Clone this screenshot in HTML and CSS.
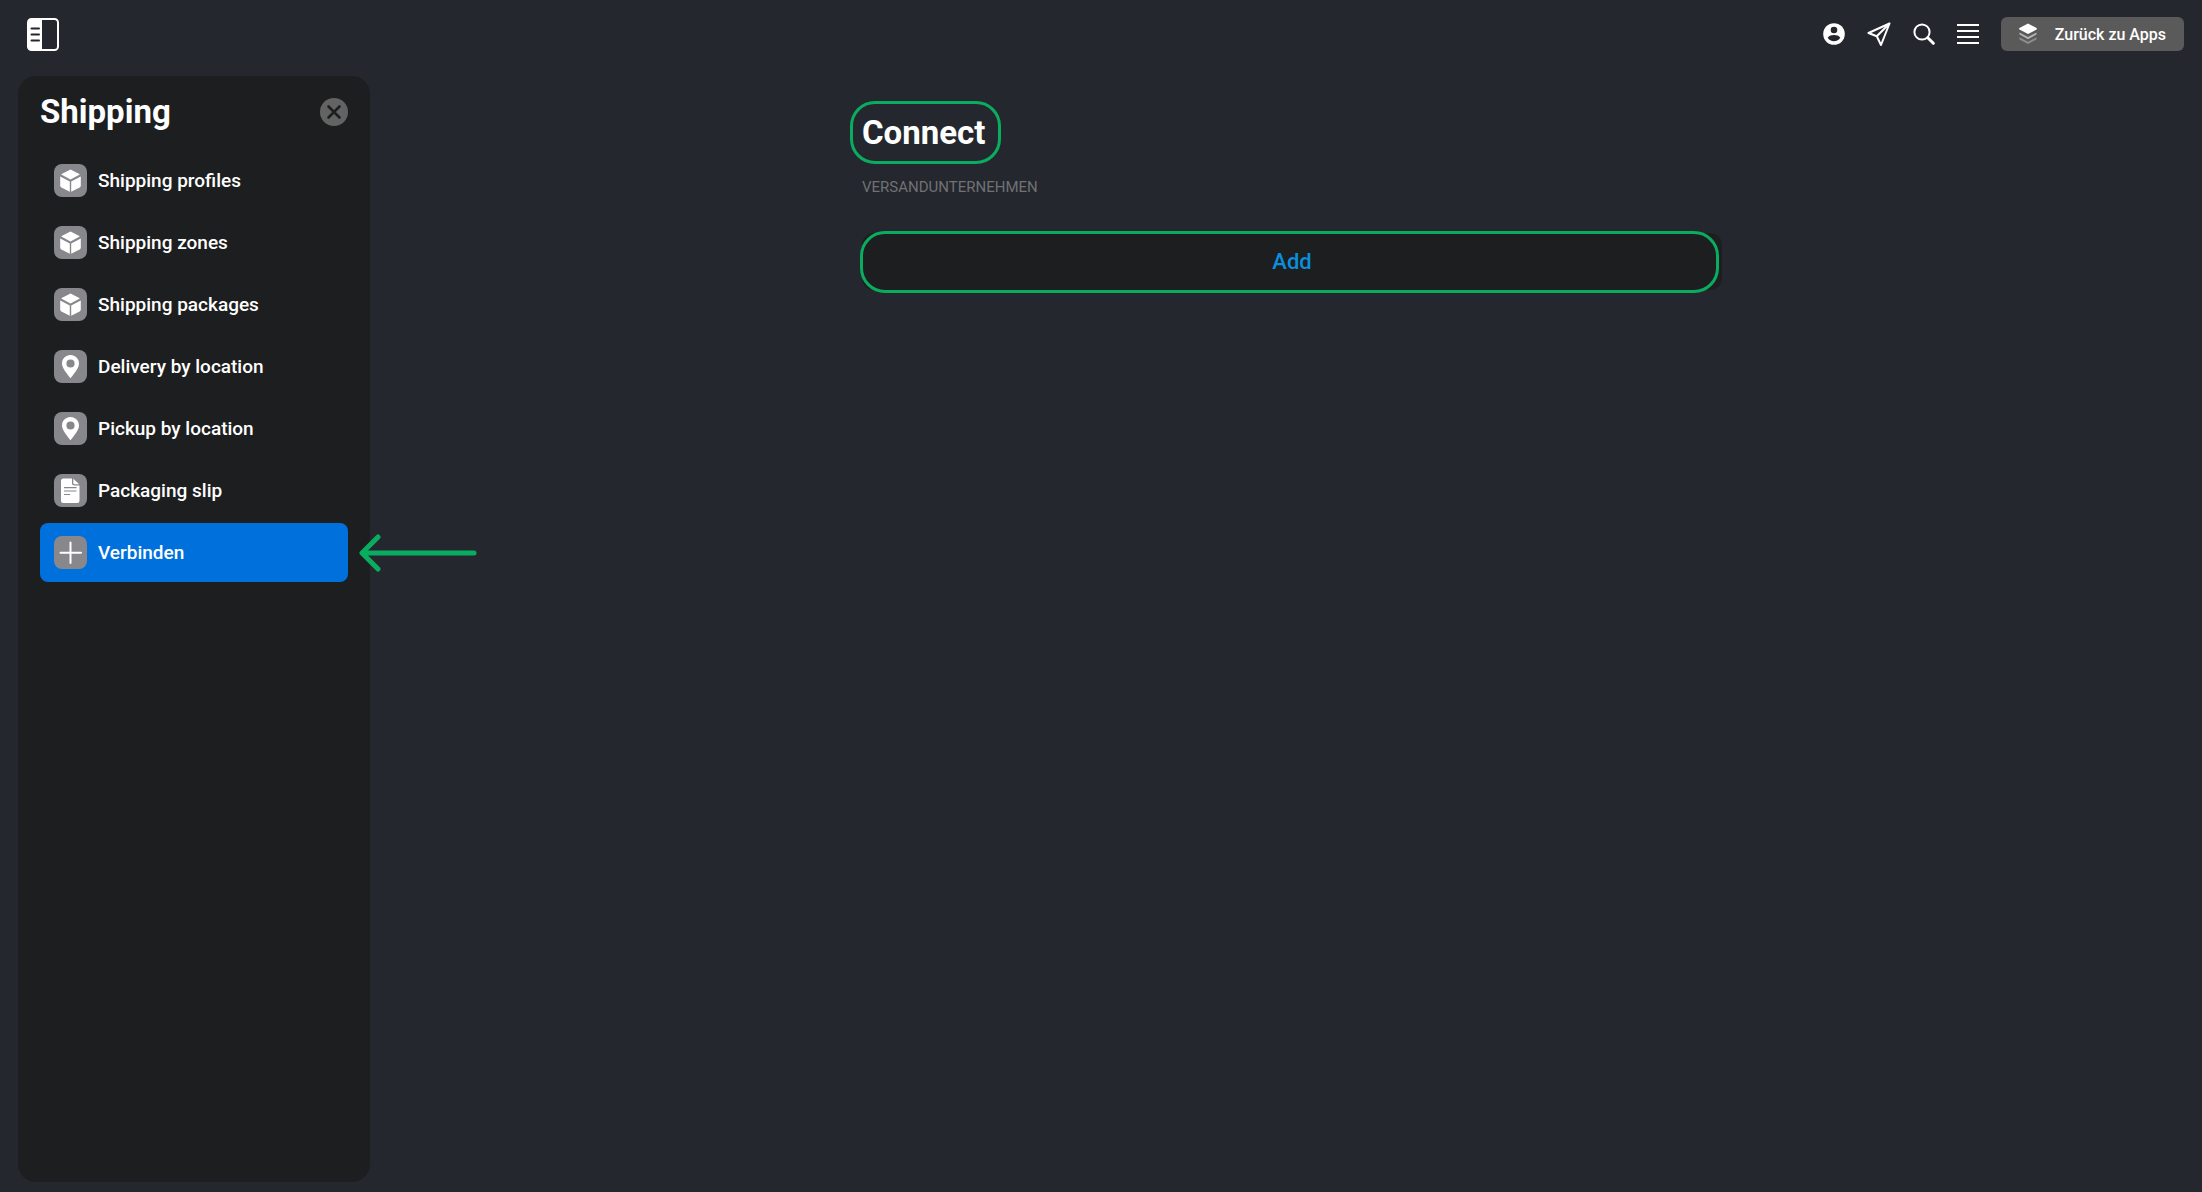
FILE: index.html
```html
<!DOCTYPE html>
<html lang="de">
<head>
    <meta charset="UTF-8">
    <meta name="viewport" content="width=device-width, initial-scale=1.0">
    <title>Shipping</title>
    <link rel="stylesheet" href="styles.css">
</head>
<body>
    <!-- Shared icon shapes -->
    <svg class="sprite" aria-hidden="true">
        <symbol id="icon-box" viewBox="0 0 33 33">
            <path d="M16.500 5.400 L25.300 10 Q25.800 10.400 25.300 10.800 L16.500 15.400 L7.700 10.800 Q7.200 10.400 7.700 10Z"/>
            <path d="M6.200 12.600 L15.800 17.600 V27.800 L7.400 23.600 Q6.200 23 6.200 21.600Z"/>
            <path d="M26.800 12.600 L17.200 17.600 V27.800 L25.600 23.600 Q26.800 23 26.800 21.600Z"/>
        </symbol>
        <symbol id="icon-pin" viewBox="0 0 33 33">
            <path fill-rule="evenodd" d="M16.500 5 C11.700 5 8 8.700 8 13.400 C8 18.500 13.500 24 16.500 28.200 C19.500 24 25 18.500 25 13.400 C25 8.700 21.300 5 16.500 5Z M16.500 9.400 A4.100 4.100 0 1 1 16.500 17.600 A4.100 4.100 0 1 1 16.500 9.400Z"/>
        </symbol>
    </svg>

    <!-- Top Bar -->
    <header class="topbar">
        <button class="icon-btn" aria-label="Seitenleiste">
            <svg width="32" height="33" viewBox="0 0 32 33">
                <rect x="1" y="1" width="30" height="31" rx="3.500" fill="none" stroke="#fff" stroke-width="2"/>
                <path d="M4 1H15V32H4Q1 32 1 29V4Q1 1 4 1Z" fill="#fff"/>
                <path d="M4.500 10.500H12M4.500 16.500H12M4.500 22.500H12" stroke="#24272e" stroke-width="2" stroke-linecap="round"/>
            </svg>
        </button>
        <div class="topbar-actions">
            <button class="icon-btn" aria-label="Konto">
                <svg width="22" height="22" viewBox="0 0 22 22">
                    <circle cx="11" cy="11" r="10.800" fill="#fff"/>
                    <circle cx="11" cy="7" r="3.300" fill="#24272e"/>
                    <path d="M4.700 14.800C6 12.700 8.300 12 11 12S16 12.700 17.300 14.800C16 17 13.700 18.200 11 18.200S6 17 4.700 14.800Z" fill="#24272e"/>
                </svg>
            </button>
            <button class="icon-btn" aria-label="Senden">
                <svg width="24" height="24" viewBox="0 0 24 24" fill="none" stroke="#fff" stroke-width="2" stroke-linejoin="round">
                    <path d="M22.500 1.500L1.500 11L9.800 14.200L14 23Z"/>
                    <path d="M22.500 1.500L9.800 14.200"/>
                </svg>
            </button>
            <button class="icon-btn" aria-label="Suchen">
                <svg width="22" height="22" viewBox="0 0 22 22" fill="none" stroke="#fff">
                    <circle cx="9" cy="9" r="7.600" stroke-width="2"/>
                    <path d="M14.800 14.800L20.300 20.300" stroke-width="3" stroke-linecap="round"/>
                </svg>
            </button>
            <button class="icon-btn" aria-label="Menü">
                <svg width="22" height="22" viewBox="0 0 22 22" stroke="#fff" stroke-width="2">
                    <path d="M0 2H22M0 8H22M0 14H22M0 20H22"/>
                </svg>
            </button>
            <a class="back-btn" href="#apps">
                <svg width="18" height="22" viewBox="0 0 18 22">
                    <path d="M9 0.500L17.500 5Q18.500 5.800 17.500 6.600L9 11L0.500 6.600Q-0.500 5.800 0.500 5Z" fill="#fff"/>
                    <path d="M0.500 9.500L9 14L17.500 9.500V11.600L9 16.200L0.500 11.600Z" fill="#b5b5b5"/>
                    <path d="M0.500 14.300L9 18.800L17.500 14.300V16.400L9 21L0.500 16.400Z" fill="#8d8d8d"/>
                </svg>
                <span>Zurück zu Apps</span>
            </a>
        </div>
    </header>

    <div class="layout">
        <!-- Sidebar -->
        <aside class="sidebar">
            <div class="sidebar-header">
                <h2>Shipping</h2>
                <button class="icon-btn" aria-label="Schließen">
                    <svg width="28" height="28" viewBox="0 0 28 28">
                        <circle cx="14" cy="14" r="14" fill="#636363"/>
                        <path d="M8.500 8.500L19.500 19.500M19.500 8.500L8.500 19.500" stroke="#1d1e1f" stroke-width="2.600" stroke-linecap="round"/>
                    </svg>
                </button>
            </div>
            <nav class="menu">
                <a class="menu-item" href="#profiles">
                    <svg class="menu-icon"><use href="#icon-box"/></svg>
                    <span>Shipping profiles</span>
                </a>
                <a class="menu-item" href="#zones">
                    <svg class="menu-icon"><use href="#icon-box"/></svg>
                    <span>Shipping zones</span>
                </a>
                <a class="menu-item" href="#packages">
                    <svg class="menu-icon"><use href="#icon-box"/></svg>
                    <span>Shipping packages</span>
                </a>
                <a class="menu-item" href="#delivery">
                    <svg class="menu-icon"><use href="#icon-pin"/></svg>
                    <span>Delivery by location</span>
                </a>
                <a class="menu-item" href="#pickup">
                    <svg class="menu-icon"><use href="#icon-pin"/></svg>
                    <span>Pickup by location</span>
                </a>
                <a class="menu-item" href="#slip">
                    <svg class="menu-icon" viewBox="0 0 33 33">
                        <path d="M9.500 4.500H18V9Q18 11.500 20.500 11.500H25.500V26.500Q25.500 29 23 29H9.500Q7 29 7 26.500V7Q7 4.500 9.500 4.500Z"/>
                        <path d="M19.300 4.800L25.200 10.300H20.800Q19.300 10.300 19.300 8.800Z"/>
                        <path d="M10 13.700H22.500M10 17H22.500M10 20.500H16" stroke="#88878c" stroke-width="1.200"/>
                    </svg>
                    <span>Packaging slip</span>
                </a>
                <a class="menu-item active" href="#connect" aria-current="page">
                    <svg class="menu-icon" viewBox="0 0 33 33">
                        <path d="M16.500 6.500V27M6.500 16.700H27" stroke="#fff" stroke-width="2" stroke-linecap="round"/>
                    </svg>
                    <span>Verbinden</span>
                    <svg class="arrow" width="118" height="38" viewBox="0 0 118 38" aria-hidden="true">
                        <path d="M115 19H4M19 3L3 19L19 35" fill="none" stroke="#0aad60" stroke-width="5" stroke-linecap="round" stroke-linejoin="round"/>
                    </svg>
                </a>
            </nav>
        </aside>

        <!-- Content -->
        <main class="content">
            <div class="panel">
                <h1 class="marked">Connect</h1>
                <p class="section-label">VERSANDUNTERNEHMEN</p>
                <button class="add-btn marked">Add</button>
            </div>
        </main>
    </div>
</body>
</html>
```
FILE: styles.css
```css
/* Global Styling */
* {
    box-sizing: border-box;
}
body {
    margin: 0;
    min-height: 100vh;
    display: flex;
    flex-direction: column;
    background-color: #24272e;
    color: #fff;
    font-family: Roboto, "Liberation Sans", sans-serif;
}
h1, h2, p {
    margin: 0;
}
h1, h2 {
    font-size: 33px;
    line-height: 40px;
    font-weight: 700;
}
svg {
    display: block;
}
.sprite {
    position: absolute;
    width: 0;
    height: 0;
}
.icon-btn {
    padding: 0;
    border: none;
    background: none;
    cursor: pointer;
}
/* Top Bar */
.topbar {
    display: flex;
    justify-content: space-between;
    align-items: center;
    height: 68px;
    padding: 0 18px 0 27px;
}
.topbar-actions {
    display: flex;
    align-items: center;
    gap: 22px;
}
.back-btn {
    display: flex;
    align-items: center;
    gap: 18px;
    height: 34px;
    padding: 0 18px;
    border-radius: 6px;
    background-color: #5a5a5a;
    color: #fff;
    font-size: 16px;
    font-weight: 500;
    text-decoration: none;
}
/* Layout */
.layout {
    flex: 1;
    display: flex;
    gap: 12px;
    padding: 8px 0 10px 18px;
}
/* Sidebar */
.sidebar {
    width: 352px;
    padding: 16px 22px;
    border-radius: 18px;
    background-color: #1d1e1f;
}
.sidebar-header {
    display: flex;
    justify-content: space-between;
    align-items: center;
    margin-bottom: 19px;
}
.menu {
    display: flex;
    flex-direction: column;
    gap: 3px;
}
.menu-item {
    position: relative;
    display: flex;
    align-items: center;
    gap: 11px;
    height: 59px;
    padding: 0 14px;
    border-radius: 8px;
    color: #fff;
    font-size: 19px;
    font-weight: 500;
    text-decoration: none;
}
.menu-item.active {
    background-color: #0071dc;
}
.menu-icon {
    width: 33px;
    height: 33px;
    border-radius: 8px;
    background-color: #88878c;
    fill: #fff;
}
/* Pointer next to the active entry */
.arrow {
    position: absolute;
    left: 100%;
    margin-left: 11px;
}
/* Content */
.content {
    flex: 1;
    display: flex;
    justify-content: center;
    padding-top: 37px;
}
.panel {
    width: 860px;
}
.section-label {
    margin: 24px 0 36px;
    color: #707174;
    font-size: 15px;
    line-height: 20px;
}
.add-btn {
    width: 100%;
    height: 57px;
    border: none;
    border-radius: 12px;
    background-color: #1d1e1f;
    color: #0a8fdc;
    font-family: inherit;
    font-size: 22px;
    font-weight: 500;
    cursor: pointer;
}
/* Green highlight frames */
.marked {
    position: relative;
}
.marked::after {
    content: "";
    position: absolute;
    border: 3px solid #0aad60;
    border-radius: 25px;
}
h1.marked {
    width: max-content;
}
h1.marked::after {
    inset: -12px -16px -11px -12px;
}
.add-btn.marked::after {
    inset: -2px 3px -3px -2px;
}
```
